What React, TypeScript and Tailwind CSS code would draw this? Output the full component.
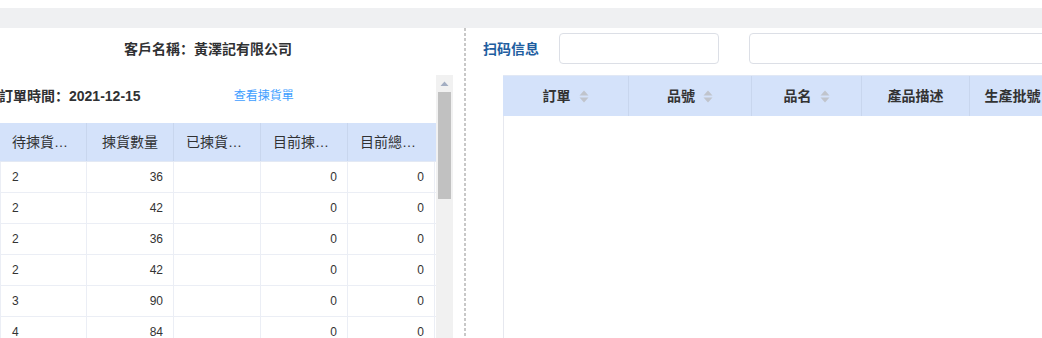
import React from "react";

const font = { fontFamily: '"Liberation Sans", "Noto Sans CJK SC", sans-serif' };

const pickRows = [
  { wait: "2", qty: "36", done: "", cur: "0", total: "0" },
  { wait: "2", qty: "42", done: "", cur: "0", total: "0" },
  { wait: "2", qty: "36", done: "", cur: "0", total: "0" },
  { wait: "2", qty: "42", done: "", cur: "0", total: "0" },
  { wait: "3", qty: "90", done: "", cur: "0", total: "0" },
  { wait: "4", qty: "84", done: "", cur: "0", total: "0" },
];

const SortIcon = () => (
  <svg width="10" height="13" viewBox="0 0 10 13" className="ml-2 shrink-0">
    <path d="M5 0.5 L9.5 5.5 L0.5 5.5 Z" fill="#c0c4cc" />
    <path d="M5 12.5 L9.5 7.5 L0.5 7.5 Z" fill="#c0c4cc" />
  </svg>
);

const scanCols = [
  { label: "訂單", w: "w-[126px]", sort: true },
  { label: "品號", w: "w-[123px]", sort: true },
  { label: "品名", w: "w-[110px]", sort: true },
  { label: "產品描述", w: "w-[108px]", sort: false },
  { label: "生產批號", w: "w-[86px]", sort: false },
  { label: "數量", w: "w-[100px]", sort: false },
];

export default function App() {
  return (
    <div className="w-[1042px] h-[338px] overflow-hidden bg-white flex flex-col text-[#333]" style={font}>
      <div className="h-[8px] bg-white shrink-0" />
      <div className="h-[20px] bg-[#eff0f2] shrink-0" />
      <div className="flex flex-1 min-h-0">
        {/* left: picking list */}
        <div className="w-[464px] shrink-0 flex flex-col">
          <div className="h-[47px] shrink-0 pt-[11px] pr-[48px] flex justify-center">
            <span className="text-[14px] leading-[20px] font-bold text-[#303133]">客戶名稱：黃澤記有限公司</span>
          </div>
          <div className="flex flex-1 min-h-0 pr-[11px]">
            <div className="w-[436px] shrink-0 overflow-hidden">
              <div className="flex items-center pt-[11px] pb-[17px] leading-[20px] -ml-[1px]">
                <span className="text-[14px] font-bold text-[#303133]">訂單時間：2021-12-15</span>
                <span className="ml-[93px] text-[12px] text-[#409eff]">查看揀貨單</span>
              </div>
              <div className="w-[436px]">
                <div className="flex h-[39px] bg-[#d4e2fa] border-b border-[#e3e9f4] text-[14px] text-[#303133]">
                  <div className="w-[87px] border-r border-[#c8d6ee] px-[12px] flex items-center min-w-0">
                    <span className="truncate">待揀貨數量</span>
                  </div>
                  <div className="w-[87px] border-r border-[#c8d6ee] px-[12px] flex items-center justify-center">
                    <span className="whitespace-nowrap">揀貨數量</span>
                  </div>
                  <div className="w-[87px] border-r border-[#c8d6ee] px-[12px] flex items-center min-w-0">
                    <span className="truncate">已揀貨數量</span>
                  </div>
                  <div className="w-[87px] border-r border-[#c8d6ee] px-[12px] flex items-center min-w-0">
                    <span className="truncate">目前揀貨數量</span>
                  </div>
                  <div className="w-[88px] px-[12px] flex items-center min-w-0">
                    <span className="truncate">目前總數量</span>
                  </div>
                </div>
                {pickRows.map((r, i) => (
                  <div key={i} className="flex h-[31px] border-b border-l border-[#ebeef5] text-[12px] text-[#333]">
                    <div className="w-[86px] border-r border-[#ebeef5] pl-[11px] flex items-center">{r.wait}</div>
                    <div className="w-[87px] border-r border-[#ebeef5] pr-[10px] flex items-center justify-end">{r.qty}</div>
                    <div className="w-[87px] border-r border-[#ebeef5] pr-[10px] flex items-center justify-end">{r.done}</div>
                    <div className="w-[87px] border-r border-[#ebeef5] pr-[10px] flex items-center justify-end">{r.cur}</div>
                    <div className="w-[87px] border-r border-[#ebeef5] pr-[10px] flex items-center justify-end">{r.total}</div>
                  </div>
                ))}
              </div>
            </div>
            {/* scrollbar */}
            <div className="w-[17px] shrink-0 bg-[#f1f1f1] flex flex-col items-center">
              <svg width="9" height="6" viewBox="0 0 9 6" className="mt-[6px]">
                <path d="M4.5 0.5 L8.5 5 L0.5 5 Z" fill="#a3aec2" />
              </svg>
              <div className="mt-[5px] w-[13px] h-[107px] bg-[#c1c1c1]" />
            </div>
          </div>
        </div>

        {/* dashed divider */}
        <div className="w-[2px] shrink-0 bg-[linear-gradient(to_bottom,#c8c8c8_60%,transparent_60%)] bg-[length:2px_5px]" />

        {/* right: scan info */}
        <div className="flex-1 min-w-0 flex flex-col pl-[17px]">
          <div className="flex items-center pt-[5px] shrink-0">
            <span className="text-[14px] leading-[20px] font-bold text-[#215d9f] whitespace-nowrap">扫码信息</span>
            <input className="ml-[20px] w-[160px] h-[31px] shrink-0 border border-[#dcdfe6] rounded-[4px] bg-white outline-none" />
            <input className="ml-[30px] w-[400px] h-[31px] shrink-0 border border-[#dcdfe6] rounded-[4px] bg-white outline-none" />
          </div>
          <div className="ml-[20px] mt-[11px] flex-1 flex flex-col min-h-0">
            <div className="flex h-[41px] shrink-0 bg-[#d4e2fa] border-t border-[#e1e8f5]">
              {scanCols.map((c) => (
                <div
                  key={c.label}
                  className={`${c.w} shrink-0 border-r border-[#c8d6ee] flex items-center justify-center text-[14px] font-bold text-[#333] whitespace-nowrap`}
                >
                  <span>{c.label}</span>
                  {c.sort && <SortIcon />}
                </div>
              ))}
            </div>
            <div className="flex-1 border-l border-[#e6e8ef] bg-white" />
          </div>
        </div>
      </div>
    </div>
  );
}
